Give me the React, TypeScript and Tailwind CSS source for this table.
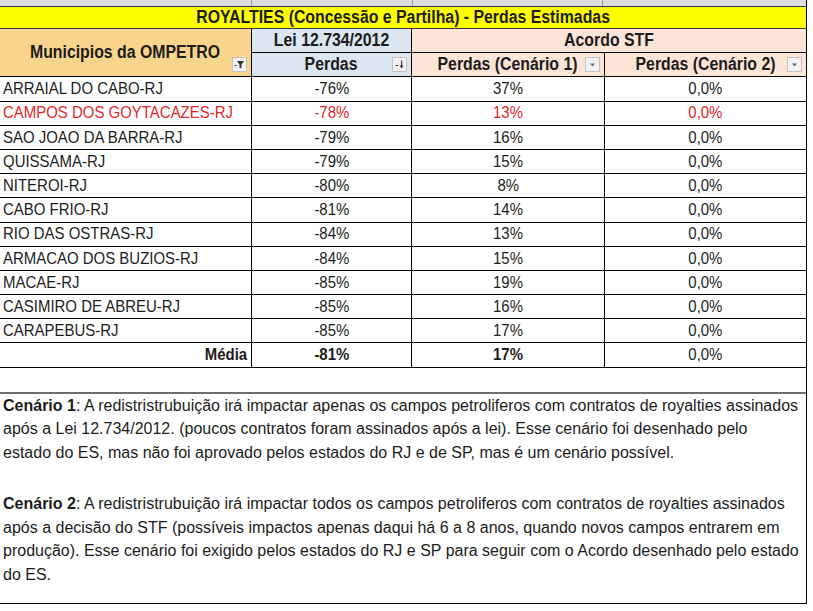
import React from "react";

type Row = { name: string; lei: string; c1: string; c2: string; red?: boolean };

const rows: Row[] = [
  { name: "ARRAIAL DO CABO-RJ", lei: "-76%", c1: "37%", c2: "0,0%" },
  { name: "CAMPOS DOS GOYTACAZES-RJ", lei: "-78%", c1: "13%", c2: "0,0%", red: true },
  { name: "SAO JOAO DA BARRA-RJ", lei: "-79%", c1: "16%", c2: "0,0%" },
  { name: "QUISSAMA-RJ", lei: "-79%", c1: "15%", c2: "0,0%" },
  { name: "NITEROI-RJ", lei: "-80%", c1: "8%", c2: "0,0%" },
  { name: "CABO FRIO-RJ", lei: "-81%", c1: "14%", c2: "0,0%" },
  { name: "RIO DAS OSTRAS-RJ", lei: "-84%", c1: "13%", c2: "0,0%" },
  { name: "ARMACAO DOS BUZIOS-RJ", lei: "-84%", c1: "15%", c2: "0,0%" },
  { name: "MACAE-RJ", lei: "-85%", c1: "19%", c2: "0,0%" },
  { name: "CASIMIRO DE ABREU-RJ", lei: "-85%", c1: "16%", c2: "0,0%" },
  { name: "CARAPEBUS-RJ", lei: "-85%", c1: "17%", c2: "0,0%" },
];

// texto estreito, como na planilha
function N({ children, left }: { children: React.ReactNode; left?: boolean }) {
  return (
    <span className={`inline-block whitespace-nowrap scale-x-[0.88] ${left ? "origin-left" : "origin-center"}`}>
      {children}
    </span>
  );
}

// botões de filtro do Excel
function FilterButton({ kind }: { kind: "filter" | "sort" | "drop" }) {
  return (
    <span className="absolute right-[4px] bottom-[4px] flex h-[15px] w-[15px] items-center justify-center border border-[#c4c4c4] bg-[#f3f3f3]">
      <svg width="11" height="11" viewBox="0 0 11 11">
        {kind === "filter" && (
          <>
            <path d="M3 2h7L7.5 5.5V9.5L5.5 8.5V5.5Z" fill="#333" />
            <rect x="0.5" y="6" width="2" height="1" fill="#333" />
          </>
        )}
        {kind === "sort" && (
          <>
            <rect x="7" y="1.5" width="1.2" height="7" fill="#333" />
            <path d="M5.5 6.5h4L7.6 9.5Z" fill="#333" />
            <rect x="1.5" y="6" width="2.5" height="1" fill="#333" />
          </>
        )}
        {kind === "drop" && <path d="M3 4.5h5L5.5 7.5Z" fill="#666" />}
      </svg>
    </span>
  );
}

export default function App() {
  const cell = "flex h-[24.2px] items-center border-b border-r border-black";
  return (
    <div className="h-[611px] w-[813px] bg-white font-['Liberation_Sans',Arial,sans-serif] text-[#1c1c1c]">
      <div className="w-[807px] border-r border-black">
        {/* resto da linha de cima */}
        <div className="grid h-[6px] grid-cols-[252px_161px_190px_1fr] bg-[#dcdcdc]">
          <div className="border-r border-[#9a9a9a]" />
          <div className="border-r border-[#9a9a9a]" />
          <div className="border-r border-[#9a9a9a]" />
          <div />
        </div>

        <div className="text-[17px]">
          {/* Título */}
          <div className="flex h-[23px] items-center justify-center border-y border-[#3a3a3a] bg-[#ffff00] text-[18px] font-bold">
            <N>ROYALTIES (Concessão e Partilha) - Perdas Estimadas</N>
          </div>

          {/* Cabeçalho */}
          <div className="grid grid-cols-[252px_160px_193px_1fr] font-bold">
            <div className="relative row-span-2 flex items-center justify-center border-b border-r border-black bg-[#f9d48c] text-[18px]">
              <N>Municipios da OMPETRO</N>
              <FilterButton kind="filter" />
            </div>
            <div className={`${cell} justify-center bg-[#dce6f1] text-[18px]`}>
              <N>Lei 12.734/2012</N>
            </div>
            <div className={`${cell} col-span-2 justify-center border-r-0 bg-[#fce4d6] text-[18px]`}>
              <N>Acordo STF</N>
            </div>
            <div className={`${cell} relative justify-center bg-[#dce6f1] text-[18px]`}>
              <N>Perdas</N>
              <FilterButton kind="sort" />
            </div>
            <div className={`${cell} relative justify-center bg-[#fce4d6] text-[18px]`}>
              <N>Perdas (Cenário 1)</N>
              <FilterButton kind="drop" />
            </div>
            <div className={`${cell} relative justify-center border-r-0 bg-[#fce4d6] text-[18px]`}>
              <N>Perdas (Cenário 2)</N>
              <FilterButton kind="drop" />
            </div>

            {rows.map((r) => (
              <React.Fragment key={r.name}>
                <div className={`${cell} pl-[3px] font-normal ${r.red ? "text-[#e4262a]" : ""}`}>
                  <N left>{r.name}</N>
                </div>
                <div className={`${cell} justify-center font-normal ${r.red ? "text-[#e4262a]" : ""}`}>
                  <N>{r.lei}</N>
                </div>
                <div className={`${cell} justify-center font-normal ${r.red ? "text-[#e4262a]" : ""}`}>
                  <N>{r.c1}</N>
                </div>
                <div className={`${cell} justify-center border-r-0 font-normal ${r.red ? "text-[#e4262a]" : ""}`}>
                  <N>{r.c2}</N>
                </div>
              </React.Fragment>
            ))}

            <div className={`${cell} justify-end pr-[4px]`}>
              <span className="inline-block origin-right scale-x-[0.88]">Média</span>
            </div>
            <div className={`${cell} justify-center`}>
              <N>-81%</N>
            </div>
            <div className={`${cell} justify-center`}>
              <N>17%</N>
            </div>
            <div className={`${cell} justify-center border-r-0 font-normal`}>
              <N>0,0%</N>
            </div>
          </div>
        </div>

        <div className="h-[26px] border-b-2 border-[#6e6e6e]" />

        {/* Notas */}
        <div className="whitespace-nowrap border-b border-black pb-[17px] pl-[3px] text-[16px] leading-[23.5px]">
          <p>
            <b>Cenário 1</b>: A redistristrubuição irá impactar apenas os campos petroliferos com contratos de royalties assinados
            <br />
            após a Lei 12.734/2012. (poucos contratos foram assinados após a lei). Esse cenário foi desenhado pelo
            <br />
            estado do ES, mas não foi aprovado pelos estados do RJ e de SP, mas é um cenário possível.
          </p>
          <p className="mt-[28px]">
            <b>Cenário 2</b>: A redistristrubuição irá impactar todos os campos petroliferos com contratos de royalties assinados
            <br />
            após a decisão do STF (possíveis impactos apenas daqui há 6 a 8 anos, quando novos campos entrarem em
            <br />
            produção). Esse cenário foi exigido pelos estados do RJ e SP para seguir com o Acordo desenhado pelo estado
            <br />
            do ES.
          </p>
        </div>
      </div>
    </div>
  );
}
